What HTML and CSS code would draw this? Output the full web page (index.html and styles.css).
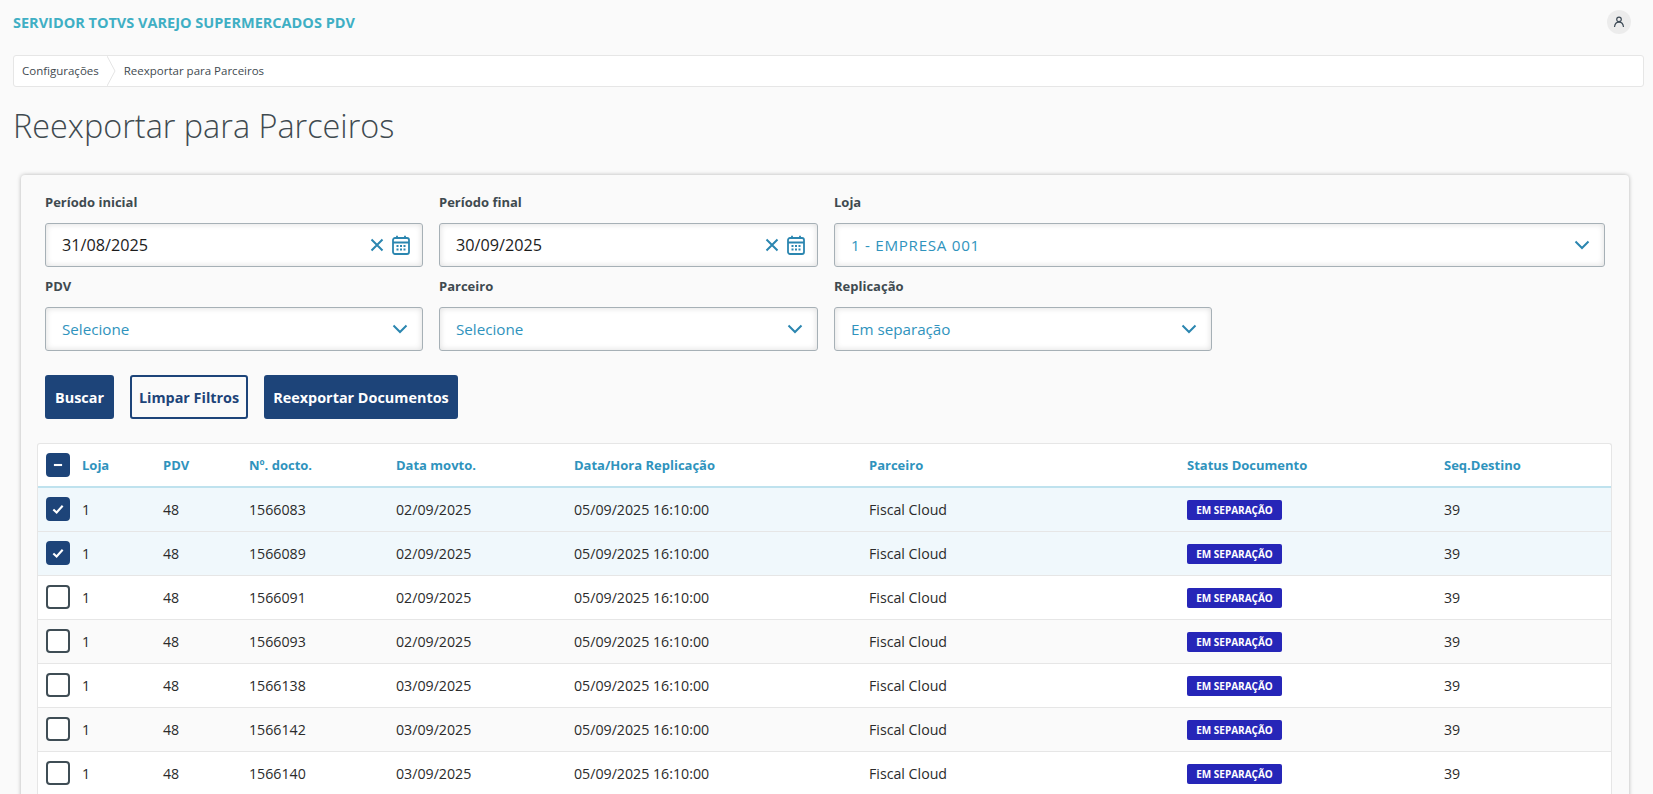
FILE: index.html
```html
<!DOCTYPE html>
<html lang="pt-BR">
<head>
<meta charset="utf-8">
<title>Reexportar para Parceiros</title>
<link rel="stylesheet" href="styles.css">
</head>
<body>
<header class="topbar">
  <span class="brand">SERVIDOR TOTVS VAREJO SUPERMERCADOS PDV</span>
  <span class="avatar"><svg class="avatar-icon" viewBox="0 0 12 12"><circle cx="6" cy="3.4" r="2.3"/><path d="M1.5 11 C1.8 8.2 3.5 6.2 6 6.2 S10.2 8.2 10.5 11"/></svg></span>
</header>
<nav class="crumbs">
  <span class="crumb">Configurações</span>
  <svg class="crumb-sep" viewBox="0 0 9 30" preserveAspectRatio="none"><polyline points="0,0 8,15 0,30"/></svg>
  <span class="crumb crumb-current">Reexportar para Parceiros</span>
</nav>
<h1 class="page-title">Reexportar para Parceiros</h1>
<main class="card">
  <div class="filters">
    <div class="field">
      <label class="field-label">Período inicial</label>
      <div class="control"><span class="value-date">31/08/2025</span>
        <svg class="ic-x" viewBox="0 0 14 14"><path d="M1.5 1.5 L12.5 12.5 M12.5 1.5 L1.5 12.5"/></svg>
        <svg class="ic-cal" viewBox="0 0 18 20"><rect x="1" y="3" width="16" height="16" rx="2"/><path d="M1 7.5 H17 M5 .8 V4 M13 .8 V4"/><g class="cal-dots"><rect x="4.5" y="10" width="2" height="2"/><rect x="8" y="10" width="2" height="2"/><rect x="11.5" y="10" width="2" height="2"/><rect x="4.5" y="13.5" width="2" height="2"/><rect x="8" y="13.5" width="2" height="2"/><rect x="11.5" y="13.5" width="2" height="2"/></g></svg>
      </div>
    </div>
    <div class="field">
      <label class="field-label">Período final</label>
      <div class="control"><span class="value-date">30/09/2025</span>
        <svg class="ic-x" viewBox="0 0 14 14"><path d="M1.5 1.5 L12.5 12.5 M12.5 1.5 L1.5 12.5"/></svg>
        <svg class="ic-cal" viewBox="0 0 18 20"><rect x="1" y="3" width="16" height="16" rx="2"/><path d="M1 7.5 H17 M5 .8 V4 M13 .8 V4"/><g class="cal-dots"><rect x="4.5" y="10" width="2" height="2"/><rect x="8" y="10" width="2" height="2"/><rect x="11.5" y="10" width="2" height="2"/><rect x="4.5" y="13.5" width="2" height="2"/><rect x="8" y="13.5" width="2" height="2"/><rect x="11.5" y="13.5" width="2" height="2"/></g></svg>
      </div>
    </div>
    <div class="field field-wide">
      <label class="field-label">Loja</label>
      <div class="control"><span class="value-select value-caps">1 - EMPRESA 001</span>
        <svg class="ic-chev" viewBox="0 0 16 10"><polyline points="1.5,1.5 8,8 14.5,1.5"/></svg>
      </div>
    </div>
    <div class="field">
      <label class="field-label">PDV</label>
      <div class="control"><span class="value-select">Selecione</span>
        <svg class="ic-chev" viewBox="0 0 16 10"><polyline points="1.5,1.5 8,8 14.5,1.5"/></svg>
      </div>
    </div>
    <div class="field">
      <label class="field-label">Parceiro</label>
      <div class="control"><span class="value-select">Selecione</span>
        <svg class="ic-chev" viewBox="0 0 16 10"><polyline points="1.5,1.5 8,8 14.5,1.5"/></svg>
      </div>
    </div>
    <div class="field field-short">
      <label class="field-label">Replicação</label>
      <div class="control"><span class="value-select">Em separação</span>
        <svg class="ic-chev" viewBox="0 0 16 10"><polyline points="1.5,1.5 8,8 14.5,1.5"/></svg>
      </div>
    </div>
  </div>
  <div class="actions">
    <button class="btn btn-solid btn-search">Buscar</button>
    <button class="btn btn-outline btn-clear">Limpar Filtros</button>
    <button class="btn btn-solid btn-export">Reexportar Documentos</button>
  </div>
  <div class="table-wrap">
    <table class="grid">
      <colgroup>
        <col class="c-check"><col class="c-loja"><col class="c-pdv"><col class="c-doc"><col class="c-data"><col class="c-rep"><col class="c-parc"><col class="c-status"><col class="c-seq">
      </colgroup>
      <thead>
        <tr>
          <th class="cell-check"><span class="check check-on"><svg class="check-mark" viewBox="0 0 12 12"><path d="M2.5 6 H9.5"/></svg></span></th>
          <th>Loja</th><th>PDV</th><th>Nº. docto.</th><th>Data movto.</th><th>Data/Hora Replicação</th><th>Parceiro</th><th>Status Documento</th><th>Seq.Destino</th>
        </tr>
      </thead>
      <tbody>
        <tr class="row-selected"><td class="cell-check"><span class="check check-on"><svg class="check-mark" viewBox="0 0 12 12"><path d="M2 6.4 L4.8 9 L10 3.2"/></svg></span></td><td>1</td><td>48</td><td>1566083</td><td>02/09/2025</td><td>05/09/2025 16:10:00</td><td>Fiscal Cloud</td><td><span class="badge">EM SEPARAÇÃO</span></td><td>39</td></tr>
        <tr class="row-selected"><td class="cell-check"><span class="check check-on"><svg class="check-mark" viewBox="0 0 12 12"><path d="M2 6.4 L4.8 9 L10 3.2"/></svg></span></td><td>1</td><td>48</td><td>1566089</td><td>02/09/2025</td><td>05/09/2025 16:10:00</td><td>Fiscal Cloud</td><td><span class="badge">EM SEPARAÇÃO</span></td><td>39</td></tr>
        <tr><td class="cell-check"><span class="check"></span></td><td>1</td><td>48</td><td>1566091</td><td>02/09/2025</td><td>05/09/2025 16:10:00</td><td>Fiscal Cloud</td><td><span class="badge">EM SEPARAÇÃO</span></td><td>39</td></tr>
        <tr class="row-alt"><td class="cell-check"><span class="check"></span></td><td>1</td><td>48</td><td>1566093</td><td>02/09/2025</td><td>05/09/2025 16:10:00</td><td>Fiscal Cloud</td><td><span class="badge">EM SEPARAÇÃO</span></td><td>39</td></tr>
        <tr><td class="cell-check"><span class="check"></span></td><td>1</td><td>48</td><td>1566138</td><td>03/09/2025</td><td>05/09/2025 16:10:00</td><td>Fiscal Cloud</td><td><span class="badge">EM SEPARAÇÃO</span></td><td>39</td></tr>
        <tr class="row-alt"><td class="cell-check"><span class="check"></span></td><td>1</td><td>48</td><td>1566142</td><td>03/09/2025</td><td>05/09/2025 16:10:00</td><td>Fiscal Cloud</td><td><span class="badge">EM SEPARAÇÃO</span></td><td>39</td></tr>
        <tr><td class="cell-check"><span class="check"></span></td><td>1</td><td>48</td><td>1566140</td><td>03/09/2025</td><td>05/09/2025 16:10:00</td><td>Fiscal Cloud</td><td><span class="badge">EM SEPARAÇÃO</span></td><td>39</td></tr>
      </tbody>
    </table>
  </div>
</main>
</body>
</html>
```
FILE: styles.css
```css
* { box-sizing: border-box; }
html, body { height: 100%; overflow: hidden; }
body {
  margin: 0;
  background: #fafafa;
  color: #2b3338;
  font-family: "Open Sans", "Noto Sans", sans-serif;
  font-size: 14px;
}
.topbar {
  display: flex;
  align-items: center;
  justify-content: space-between;
  height: 44px;
  padding: 0 22px 0 13px;
}
.brand { color: #3fafc4; font-size: 14.5px; font-weight: 700; }
.avatar {
  display: flex; align-items: center; justify-content: center;
  width: 24px; height: 24px; border-radius: 50%;
  background: #ececec;
}
.avatar-icon { width: 12px; height: 12px; fill: none; stroke: #3d4a56; stroke-width: 1.2; }
.crumbs {
  display: flex; align-items: stretch;
  height: 32px;
  margin: 11px 9px 0 13px;
  background: #fff;
  border: 1px solid #e6e6e6;
  border-radius: 3px;
  font-size: 11.5px;
  color: #3f4a50;
}
.crumb { display: flex; align-items: center; padding: 0 0 2px 8px; }
.crumb-sep { width: 9px; height: 100%; margin-left: 8px; fill: none; stroke: #e4e4e4; }
.crumb-current { padding-left: 8px; }
.page-title {
  margin: 16px 0 0 13px;
  height: 44px;
  font-size: 32.4px;
  line-height: 44px;
  font-weight: 300;
  color: #3f4a50;
}
.card {
  height: 640px;
  margin: 28px 24px 0 21px;
  padding: 16px 17px 0 16px;
  background: #fafafa;
  border-radius: 4px 4px 0 0;
  box-shadow: 0 0 4px rgba(0,0,0,.28);
}
.filters {
  display: grid;
  grid-template-columns: 378px 379px 771px;
  column-gap: 16px;
  padding-left: 8px;
}
.field { height: 84px; }
.field-short { width: 378px; }
.field-label {
  display: block;
  height: 22px;
  margin-bottom: 10px;
  font-size: 13px;
  line-height: 22px;
  font-weight: 700;
  color: #3f4a50;
}
.control {
  display: flex; align-items: center;
  height: 44px;
  padding: 0 14px 0 16px;
  background: #fff;
  border: 1px solid #a6b0b6;
  border-radius: 3px;
  box-shadow: inset 0 0 6px rgba(0,0,0,.14);
}
.value-date { flex: 1; font-size: 16.2px; color: #1c1c1c; }
.value-select { flex: 1; font-size: 15.2px; color: #2f93bd; }
.value-caps { letter-spacing: .7px; }
.ic-x { width: 14px; height: 14px; margin-right: 8px; fill: none; stroke: #2b86b0; stroke-width: 2; }
.ic-cal { width: 18px; height: 20px; margin-right: -2px; fill: none; stroke: #2b86b0; stroke-width: 1.8; }
.cal-dots { fill: #2b86b0; stroke: none; }
.ic-chev { width: 16px; height: 10px; fill: none; stroke: #2b86b0; stroke-width: 2; }
.actions { display: flex; gap: 16px; margin-top: 16px; padding-left: 8px; }
.btn {
  height: 44px;
  padding: 0;
  border-radius: 3px;
  font-family: inherit;
  font-size: 14.4px;
  font-weight: 700;
}
.btn-solid { background: #1d4479; border: 2px solid #1d4479; color: #fff; }
.btn-outline { background: #fafafa; border: 2px solid #1d4479; color: #1d4479; }
.btn-search { width: 69px; }
.btn-clear { width: 118px; }
.btn-export { width: 194px; }
.table-wrap {
  margin-top: 24px;
  background: #fff;
  border: 1px solid #e6e6e6;
  border-bottom: 0;
  border-radius: 3px 3px 0 0;
}
.grid { width: 100%; table-layout: fixed; border-collapse: collapse; font-size: 14.2px; }
.c-check { width: 32px; }
.c-loja { width: 81px; }
.c-pdv { width: 86px; }
.c-doc { width: 147px; }
.c-data { width: 178px; }
.c-rep { width: 295px; }
.c-parc { width: 318px; }
.c-status { width: 257px; }
.grid th {
  height: 43px;
  padding: 0 0 0 12px;
  text-align: left;
  font-size: 13px;
  font-weight: 700;
  color: #2f93bd;
  border-bottom: 2px solid #bfe2ee;
}
.grid td {
  height: 44px;
  padding: 0 0 0 12px;
  color: #2b2b2b;
  border-bottom: 1px solid #e6e6e6;
}
.grid .cell-check { padding: 0 0 0 8px; }
.row-selected td { background: #f0f8fc; }
.row-alt td { background: #fafafa; }
.check {
  display: flex; align-items: center; justify-content: center;
  width: 24px; height: 24px;
  border: 2px solid #3f4d55;
  border-radius: 4px;
  background: #fff;
}
.check-on { background: #1d4479; border-color: #1d4479; }
.check-mark { width: 14px; height: 14px; fill: none; stroke: #fff; stroke-width: 1.8; }
.badge {
  display: inline-block;
  width: 95px;
  height: 20px;
  line-height: 20px;
  text-align: center;
  background: #2626b8;
  color: #fff;
  border-radius: 2px;
  font-size: 10px;
  font-weight: 700;
}
```
